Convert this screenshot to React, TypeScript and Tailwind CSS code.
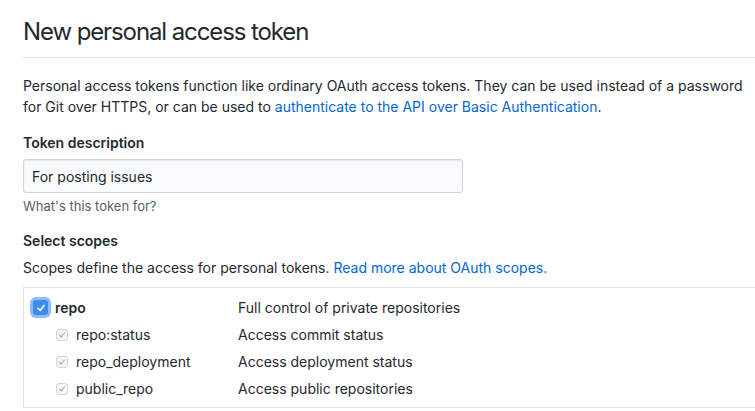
import React from "react";

function SmallCheck() {
  return (
    <span className="flex h-[12px] w-[12px] items-center justify-center rounded-[3px] border border-[#d5d5d5] bg-[#f6f6f6]">
      <svg width="8" height="8" viewBox="0 0 10 10" fill="none">
        <path d="M2 5.3 L4.2 7.5 L8 2.5" stroke="#a8a8a8" strokeWidth="1.4" strokeLinecap="round" strokeLinejoin="round" />
      </svg>
    </span>
  );
}

function BigCheck() {
  return (
    <span className="flex h-[15px] w-[15px] items-center justify-center rounded-[3px] bg-[#3b8cf0] shadow-[0_0_0_3px_#8fbcf7]">
      <svg width="10" height="10" viewBox="0 0 10 10" fill="none">
        <path d="M2 5.3 L4.2 7.5 L8 2.5" stroke="#ffffff" strokeWidth="1.5" strokeLinecap="round" strokeLinejoin="round" />
      </svg>
    </span>
  );
}

export default function App() {
  const subs = [
    ["repo:status", "Access commit status"],
    ["repo_deployment", "Access deployment status"],
    ["public_repo", "Access public repositories"],
  ];
  return (
    <div
      className="h-[411px] w-[755px] overflow-hidden bg-white pl-[23px] text-[14px] text-[#24292e]"
      style={{ fontFamily: "Inter, 'Liberation Sans', sans-serif" }}
    >
      <div className="border-b border-[#e1e4e8] pt-[17px] pb-[10px]">
        <h1 className="text-[24px] leading-[30px] font-normal tracking-[-1.1px]">New personal access token</h1>
      </div>
      <p className="mt-[17px] pr-[10px] leading-[21px]">
        Personal access tokens function like ordinary OAuth access tokens. They can be used instead of a password
        for Git over HTTPS, or can be used to{" "}
        <a className="text-[#0366d6]">authenticate to the API over Basic Authentication</a>.
      </p>
      <div className="mt-[16px] text-[14px] leading-[20px] font-semibold">Token description</div>
      <div className="mt-[6px] flex h-[34px] w-[440px] items-center rounded-[3px] border border-[#d1d5da] bg-[#fafbfc] px-[8px] shadow-[inset_0_1px_2px_rgba(27,31,35,0.075)]">
        For posting issues
      </div>
      <div className="mt-[4px] text-[13px] leading-[18px] text-[#586069]">What's this token for?</div>
      <div className="mt-[16px] leading-[20px] font-semibold">Select scopes</div>
      <div className="mt-[7px] leading-[20px]">
        Scopes define the access for personal tokens.{" "}
        <a className="text-[#0366d6]">Read more about OAuth scopes.</a>
      </div>
      <div className="mt-[9px] border-t border-b border-l border-[#e1e4e8] pt-[6px] pb-[5px]">
        <div className="flex h-[27px] items-center">
          <div className="flex w-[214px] items-center pl-[9px]">
            <BigCheck />
            <span className="ml-[7px] font-semibold">repo</span>
          </div>
          <span>Full control of private repositories</span>
        </div>
        {subs.map(([a, b]) => (
          <div key={a} className="flex h-[27px] items-center">
            <div className="flex w-[214px] items-center pl-[32px]">
              <SmallCheck />
              <span className="ml-[8px]">{a}</span>
            </div>
            <span>{b}</span>
          </div>
        ))}
      </div>
    </div>
  );
}
